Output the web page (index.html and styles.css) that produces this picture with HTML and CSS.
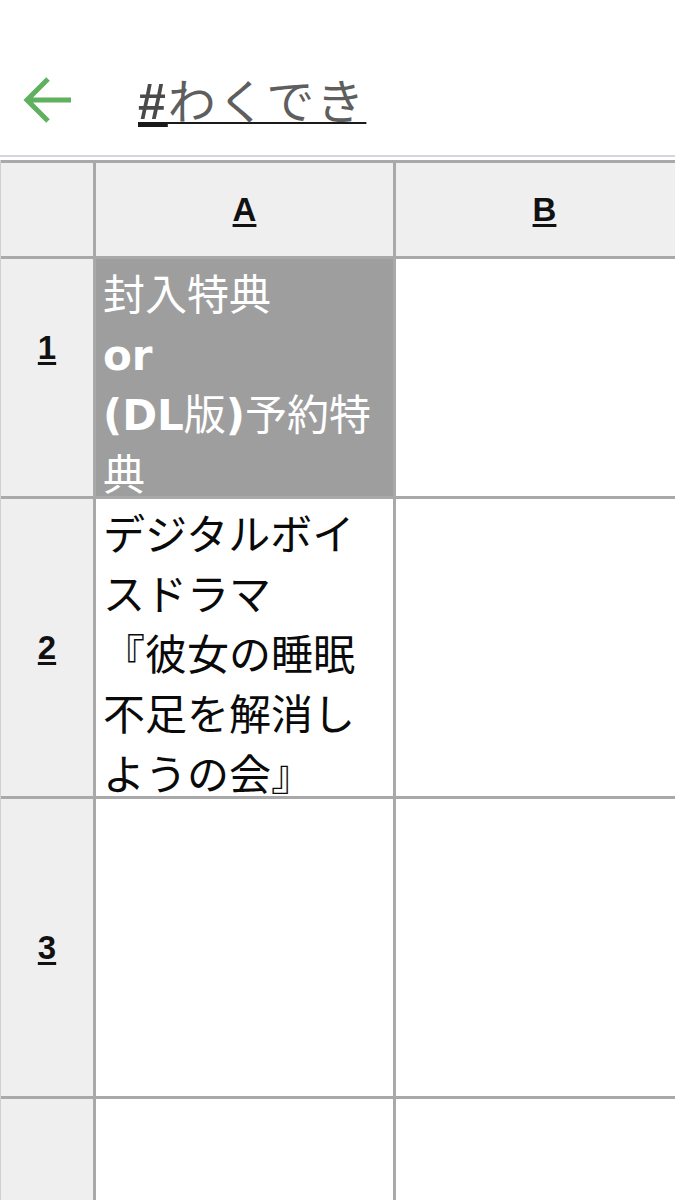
FILE: index.html
```html
<!DOCTYPE html>
<html lang="ja">
<head>
<meta charset="utf-8">
<title>#わくでき</title>
<link rel="stylesheet" href="styles.css">
</head>
<body>
<header class="topbar">
  <svg class="back" width="52" height="52" viewBox="0 0 52 52" aria-hidden="true">
    <path d="M49 26 H5 M26 5 L5 26 L26 47" fill="none" stroke="#5fb05f" stroke-width="5" stroke-linecap="butt" stroke-linejoin="miter"/>
  </svg>
  <h1 class="title"><span class="hash">#</span>わくでき</h1>
</header>
<main class="sheet">
  <div class="corner"></div>
  <div class="colhead">A</div>
  <div class="colhead">B</div>

  <div class="rowhead row1"><span>1</span></div>
  <div class="cell dark clip"><div class="shift">[店舗別]<br>封入特典<br><b>or</b><br><b>(DL</b>版<b>)</b>予約特典</div></div>
  <div class="cell"></div>

  <div class="rowhead"><span>2</span></div>
  <div class="cell text">デジタルボイスドラマ<br>『彼女の睡眠不足を解消しようの会』</div>
  <div class="cell"></div>

  <div class="rowhead"><span>3</span></div>
  <div class="cell"></div>
  <div class="cell"></div>

  <div class="rowhead"></div>
  <div class="cell"></div>
  <div class="cell"></div>
</main>
</body>
</html>
```

FILE: styles.css
```css
html, body {
  margin: 0;
  padding: 0;
  background: #ffffff;
  overflow: hidden;
  width: 675px;
  height: 1200px;
}

body {
  font-family: "Noto Sans CJK JP", sans-serif;
}

.topbar {
  border-bottom: 2px solid #d5d5dc;
  display: flex;
  align-items: center;
  box-sizing: border-box;
  height: 157px;
  padding-top: 45px;
}

.back {
  margin-left: 22px;
  display: block;
}

.title {
  margin: 0 0 0 64px;
  font-size: 48px;
  font-weight: 400;
  color: #5e5e5e;
  letter-spacing: 2px;
  text-decoration: underline;
  text-decoration-color: #1a1a1a;
  text-decoration-thickness: 2px;
  text-underline-offset: 3px;
  line-height: 60px;
}

.hash {
  font-family: "Liberation Sans", sans-serif;
  font-weight: 700;
  font-size: 50px;
  color: #4a4a4a;
  text-decoration: underline;
  text-decoration-color: #1a1a1a;
  text-decoration-thickness: 5px;
  text-underline-offset: 3px;
}

.sheet {
  margin-top: 3px;
  display: grid;
  grid-template-columns: 92px 297px 297px;
  grid-template-rows: 93px 237px 297px 297px 297px;
  gap: 3px;
  padding-top: 3px;
  background: #a9a9a9;
  border-left: 1px solid #d0d0d0;
  width: max-content;
}

.corner,
.colhead,
.rowhead {
  background: #efefef;
}

.colhead,
.rowhead {
  display: flex;
  align-items: center;
  justify-content: center;
  font-family: "Liberation Sans", sans-serif;
  font-weight: 700;
  font-size: 33px;
  color: #111;
  text-decoration: underline;
  text-decoration-thickness: 3px;
  text-underline-offset: 3px;
}

.rowhead.row1 {
  padding-bottom: 60px;
  box-sizing: border-box;
}

.cell {
  background: #ffffff;
  overflow: hidden;
  font-family: "DejaVu Sans", "Noto Sans CJK JP", sans-serif;
  font-size: 42px;
  line-height: 60px;
  color: #0a0a0a;
}

.cell.text {
  padding: 7px 6px 0 7px;
  box-sizing: border-box;
}

.cell.dark {
  background: #9e9e9e;
  color: #ffffff;
}

.cell.clip {
  padding: 0 6px 0 7px;
  box-sizing: border-box;
}

.shift {
  margin-top: -53px;
}

.shift b {
  font-weight: 700;
}
```
